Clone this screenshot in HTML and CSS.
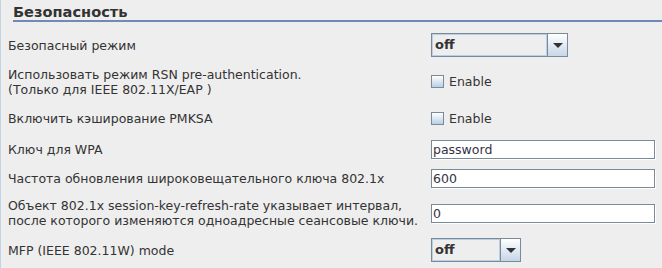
FILE: index.html
```html
<!DOCTYPE html>
<html>
<head>
<meta charset="utf-8">
<link rel="stylesheet" href="styles.css">
</head>
<body>
<div class="panel">
  <h2 class="title">Безопасность</h2>
  <div class="form">
    <div class="label">Безопасный режим</div>
    <div class="ctrl"><div class="combo combo-wide"><span class="combo-text">off</span><span class="combo-btn"><span class="arrow"></span></span></div></div>

    <div class="label">Использовать режим RSN pre-authentication.<br>(Только для IEEE 802.11X/EAP )</div>
    <div class="ctrl"><label class="check"><span class="box"></span>Enable</label></div>

    <div class="label">Включить кэширование PMKSA</div>
    <div class="ctrl"><label class="check"><span class="box"></span>Enable</label></div>

    <div class="label">Ключ для WPA</div>
    <div class="ctrl"><div class="field">password</div></div>

    <div class="label">Частота обновления широковещательного ключа 802.1x</div>
    <div class="ctrl"><div class="field">600</div></div>

    <div class="label">Объект 802.1x session-key-refresh-rate указывает интервал,<br>после которого изменяются одноадресные сеансовые ключи.</div>
    <div class="ctrl"><div class="field">0</div></div>

    <div class="label">MFP (IEEE 802.11W) mode</div>
    <div class="ctrl"><div class="combo combo-narrow"><span class="combo-text">off</span><span class="combo-btn"><span class="arrow"></span></span></div></div>
  </div>
</div>
</body>
</html>
```

FILE: styles.css
```css
html, body {
  margin: 0;
  padding: 0;
  background: #eeeeee;
}
body {
  width: 662px;
  height: 268px;
  overflow: hidden;
  font-family: "DejaVu Sans", sans-serif;
  font-size: 12.5px;
  color: #333333;
}
.panel {
  height: 268px;
  border-left: 1px solid #c3d3e4;
  box-sizing: border-box;
}
.title {
  margin: 0 0 0 12px;
  padding: 3px 0 0 0;
  height: 17px;
  font-size: 14.6px;
  line-height: 17px;
  font-weight: bold;
  color: #333333;
  border-bottom: 2px solid #7189b7;
}
.form {
  display: grid;
  grid-template-columns: 423px 1fr;
  grid-template-rows: 34px 39px 35px 27px 30px 40px 34px;
  align-items: center;
  margin-top: 6px;
  padding-left: 7px;
}
.label {
  line-height: 15px;
  white-space: nowrap;
}
.ctrl {
  display: flex;
  align-items: center;
}
.combo {
  display: flex;
  height: 24px;
  box-sizing: border-box;
  border: 1px solid #7a8a99;
  background: #eeeeee;
}
.combo-wide { width: 137px; }
.combo-narrow { width: 90px; }
.combo-text {
  flex: 1;
  border: 1px solid #b8cfe5;
  padding-left: 2px;
  font-weight: bold;
  font-size: 13px;
  line-height: 20px;
  color: #333333;
}
.combo-btn {
  width: 19px;
  border-left: 1px solid #7a8a99;
  background: linear-gradient(#ffffff, #c6d6e7);
  display: flex;
  align-items: center;
  justify-content: center;
}
.arrow {
  width: 0;
  height: 0;
  border-left: 5px solid transparent;
  border-right: 5px solid transparent;
  border-top: 5px solid #333333;
}
.check {
  display: flex;
  align-items: center;
  gap: 5px;
  font-size: 12.5px;
}
.box {
  width: 13px;
  height: 13px;
  box-sizing: border-box;
  border: 1px solid #7a8a99;
  background: linear-gradient(#ffffff, #b8cfe5);
}
.field {
  width: 224px;
  height: 19px;
  box-sizing: border-box;
  border: 1px solid #7a8a99;
  background: #ffffff;
  box-shadow: 1px 1px 0 #ffffff;
  padding-left: 1px;
  font-size: 12.5px;
  line-height: 17px;
  color: #333344;
}
```
